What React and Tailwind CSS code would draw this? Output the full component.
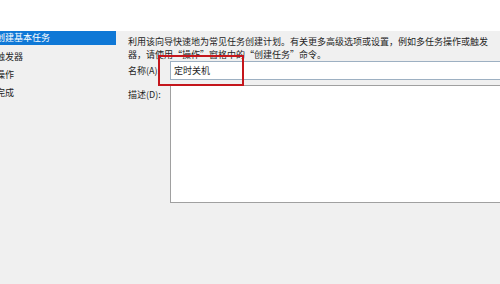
export default function App() {
  const steps = ["创建基本任务", "触发器", "操作", "完成"];

  return (
    <div className="relative w-[500px] h-[284px] overflow-hidden bg-[#f0f0f0] text-[9px] text-[#1e1e1e] font-['Noto_Sans_CJK_SC',sans-serif]">
      <div className="h-[31px] bg-white" />
      <div className="flex">
        {/* left wizard steps */}
        <div className="w-[122px] shrink-0 -ml-[6px]">
          {steps.map((s, i) =>
            i === 0 ? (
              <div key={s} className="h-[14px] mb-[3px] flex items-center pl-[2px] bg-[#0f78d6] text-white">
                {s}
              </div>
            ) : (
              <div key={s} className="h-[18px] flex items-center pl-[2px]">
                {s}
              </div>
            )
          )}
        </div>

        {/* right content */}
        <div className="flex-1 pl-[12px] pt-[4px]">
          <p className="leading-[13px] whitespace-nowrap">
            利用该向导快速地为常见任务创建计划。有关更多高级选项或设置，例如多任务操作或触发
          </p>
          <p className="leading-[13px] whitespace-nowrap">
            器，请使用“操作”窗格中的“创建任务”命令。
          </p>

          <div className="flex items-center h-[19px]">
            <span className="w-[42px] shrink-0">名称(A):</span>
            <div className="flex-1 h-[19px] bg-white border border-[#9db0c2] border-r-0 flex items-center pl-[3px]">
              定时关机
            </div>
          </div>

          <div className="flex mt-[5px]">
            <span className="w-[42px] shrink-0 pt-[3px]">描述(D):</span>
            <div className="flex-1 h-[118px] bg-white border border-[#a0a0a0] border-r-0" />
          </div>
        </div>
      </div>

      {/* red highlight box drawn over the name field */}
      <div className="absolute left-[158px] top-[55px] w-[86px] h-[31px] border-2 border-[#c4161c]" />
    </div>
  );
}
